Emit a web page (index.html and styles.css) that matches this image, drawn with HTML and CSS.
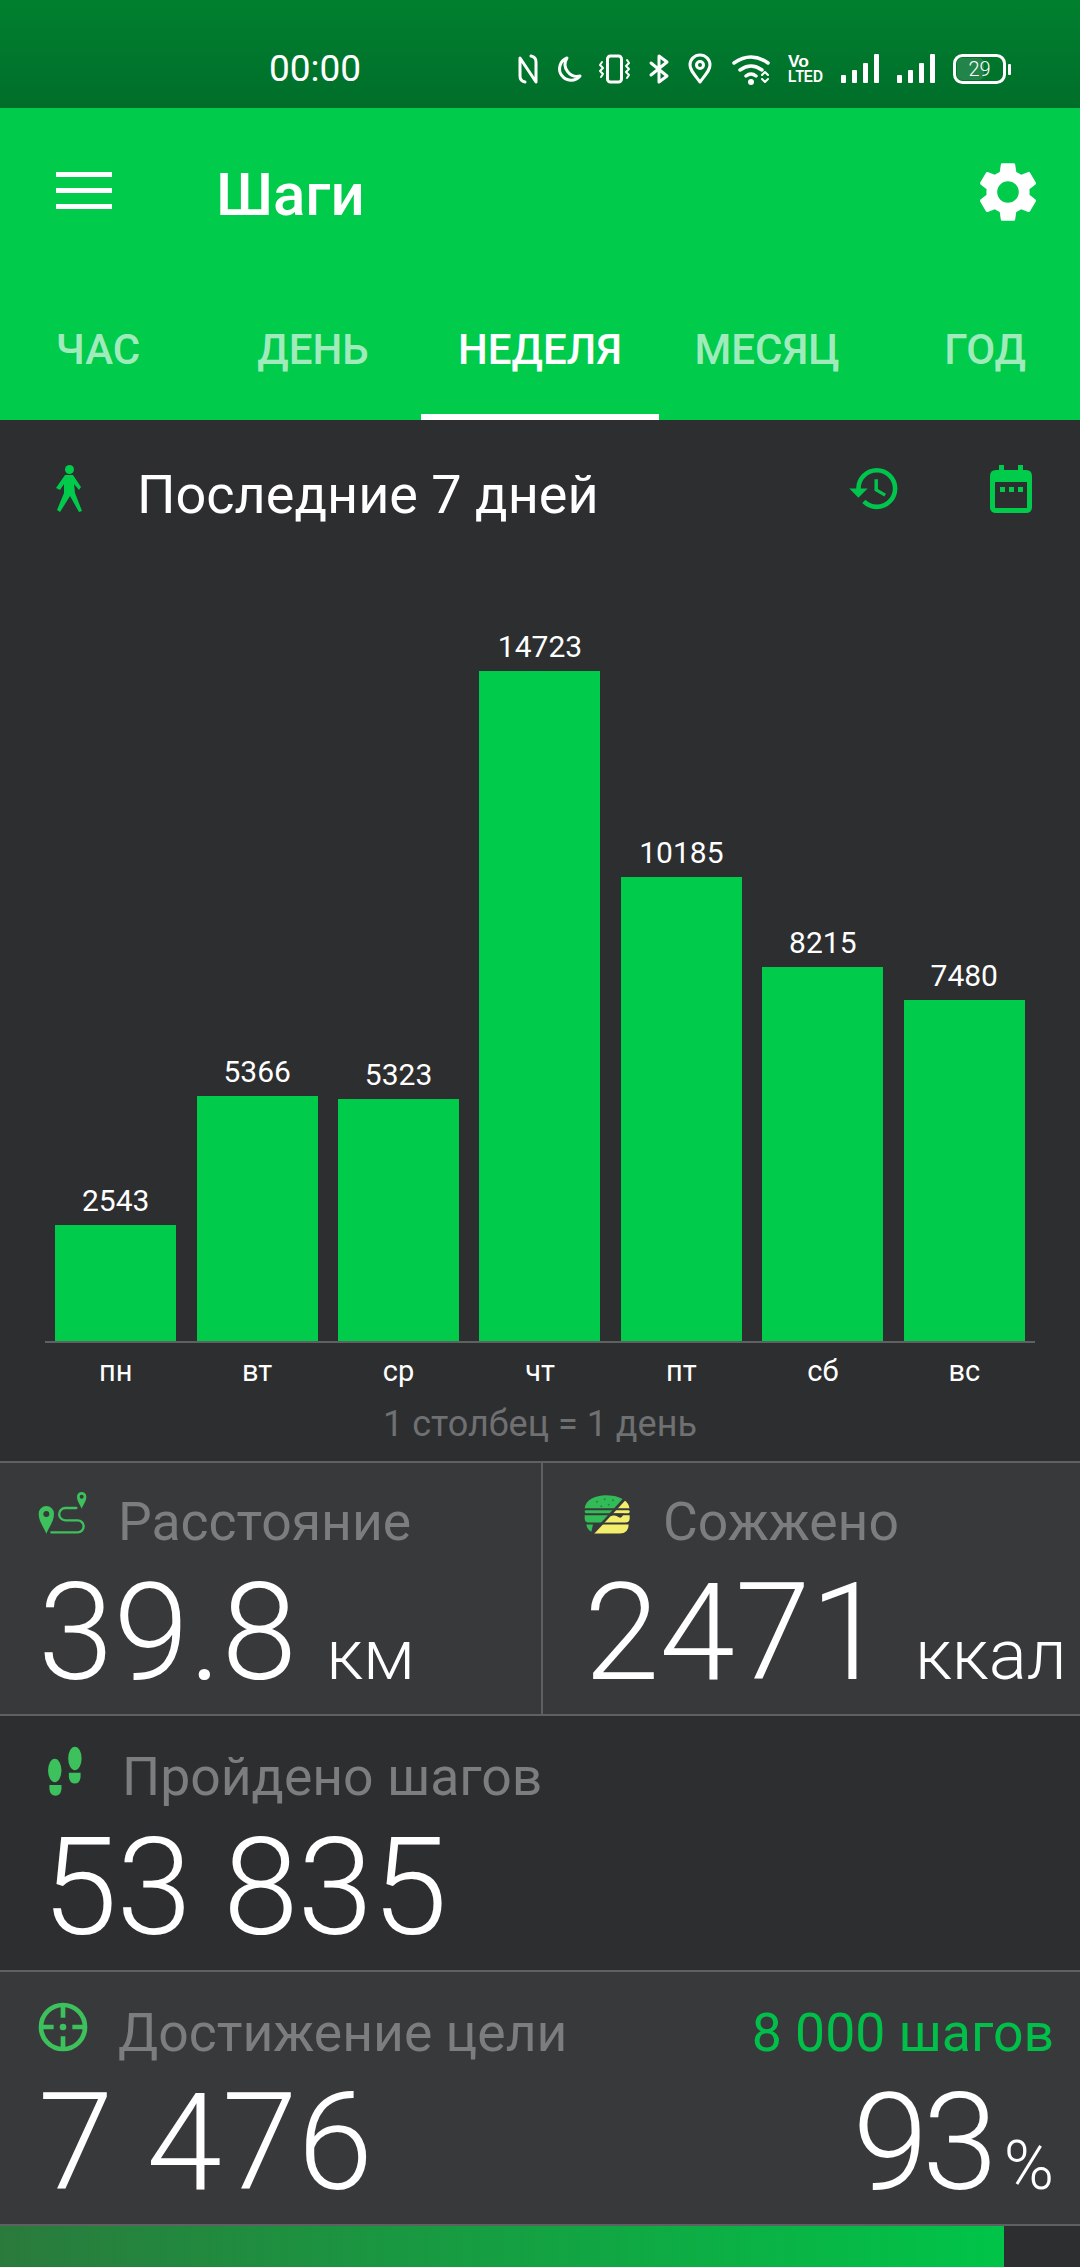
FILE: index.html
```html
<!DOCTYPE html>
<html lang="ru">
<head>
    <meta charset="UTF-8">
    <meta name="viewport" content="width=device-width, initial-scale=1.0">
    <title>Шаги</title>
    <link rel="stylesheet" href="styles.css">
</head>
<body>
    <div class="status-bar">
        <span class="status-time">00:00</span>
        <div class="status-icons">
            <svg width="22" height="30" viewBox="0 0 22 30"><path class="line" d="M8 28 Q3 27 3 22 V4 L19 28 V8 Q19 3 14 2"/></svg>
            <svg width="24" height="30" viewBox="0 0 24 30"><path class="line" d="M10 4 A11.5 11.5 0 1 0 23 22 A12 12 0 0 1 10 4 Z"/></svg>
            <svg width="32" height="30" viewBox="0 0 32 30"><rect class="line" x="8.5" y="2" width="14" height="26" rx="3"/><path class="line thin" d="M3 8 L1 11 L4 14 L1 17 L4 20 L2 23 M28 6 L30 9 L27 12 L30 15 L27 18 L30 21 L28 24"/></svg>
            <svg width="21" height="30" viewBox="0 0 21 30"><path class="line" d="M2 9 L18 22 L10 28 V2 L18 8 L2 21"/></svg>
            <svg width="27" height="30" viewBox="0 0 27 30"><path class="line" d="M12 28 C6 20 2 16 2 11 A10 10 0 0 1 22 11 C22 16 18 20 12 28 Z"/><circle class="line" cx="12" cy="11" r="3.5"/></svg>
            <svg width="37" height="30" viewBox="0 0 37 30"><path class="line wide" d="M1 9 Q18 -3 35 9 M7 16 Q18 8 29 16 M13 22 Q18 18 23 22"/><circle class="dot" cx="18" cy="28" r="3"/><path class="line thin" d="M29 21 L32 18 L35 21 M29 25 L32 28 L35 25"/></svg>
            <svg width="35" height="30" viewBox="0 0 35 30"><text class="volte" x="0" y="13" textLength="21" lengthAdjust="spacingAndGlyphs">Vo</text><text class="volte" x="0" y="28" textLength="35" lengthAdjust="spacingAndGlyphs">LTED</text></svg>
            <svg width="38" height="30" viewBox="0 0 38 30"><rect class="dot" x="0" y="21" width="5" height="8" rx="1"/><rect class="dot" x="11" y="16" width="5" height="13" rx="1"/><rect class="dot" x="22" y="9" width="5" height="20" rx="1"/><rect class="dot" x="33" y="0" width="5" height="29" rx="1"/></svg>
            <svg width="38" height="30" viewBox="0 0 38 30"><rect class="dot" x="0" y="21" width="5" height="8" rx="1"/><rect class="dot" x="11" y="16" width="5" height="13" rx="1"/><rect class="dot" x="22" y="9" width="5" height="20" rx="1"/><rect class="dot" x="33" y="0" width="5" height="29" rx="1"/></svg>
            <svg width="58" height="30" viewBox="0 0 58 30"><rect class="battery-fill" x="4" y="4" width="27" height="22" rx="5"/><rect class="line" x="1.5" y="1.5" width="50" height="27" rx="8"/><rect class="dot" x="55" y="10" width="3" height="11" rx="1"/><text class="battery-text" x="26.5" y="22" text-anchor="middle">29</text></svg>
        </div>
    </div>

    <div class="toolbar">
        <div class="menu-icon"><span></span><span></span><span></span></div>
        <h1>Шаги</h1>
        <svg class="gear" width="72" height="72" viewBox="0 0 24 24"><path d="M19.14 12.94c.04-.3.06-.61.06-.94 0-.32-.02-.64-.07-.94l2.03-1.58a.49.49 0 0 0 .12-.61l-1.92-3.32a.488.488 0 0 0-.59-.22l-2.39.96c-.5-.38-1.03-.7-1.62-.94l-.36-2.54a.484.484 0 0 0-.48-.41h-3.84c-.24 0-.43.17-.47.41l-.36 2.54c-.59.24-1.13.57-1.62.94l-2.39-.96c-.22-.08-.47 0-.59.22L2.74 8.87c-.12.21-.08.47.12.61l2.03 1.58c-.05.3-.09.63-.09.94s.02.64.07.94l-2.03 1.58a.49.49 0 0 0-.12.61l1.92 3.32c.12.22.37.29.59.22l2.39-.96c.5.38 1.03.7 1.62.94l.36 2.54c.05.24.24.41.48.41h3.84c.24 0 .44-.17.47-.41l.36-2.54c.59-.24 1.13-.56 1.62-.94l2.39.96c.22.08.47 0 .59-.22l1.92-3.32c.12-.22.07-.47-.12-.61l-2.01-1.58zM12 15.6c-1.98 0-3.6-1.62-3.6-3.6s1.62-3.6 3.6-3.6 3.6 1.62 3.6 3.6-1.62 3.6-3.6 3.6z"/></svg>
    </div>

    <div class="tabs">
        <div class="tab">ЧАС</div>
        <div class="tab">ДЕНЬ</div>
        <div class="tab tab-active">НЕДЕЛЯ</div>
        <div class="tab">МЕСЯЦ</div>
        <div class="tab">ГОД</div>
    </div>

    <div class="chart-section">
        <div class="chart-header">
            <svg class="walker" width="28" height="48" viewBox="0 0 28 48">
                <circle cx="14.5" cy="4.5" r="4.5"/>
                <path d="M10 10 H18 L26 22 L24 25 L19 19 L20 28 L27 46 L24 47 L15 31 L5 47 L2 45 L9 28 L9 19 L5 25 L1 23 Z"/>
            </svg>
            <div class="chart-title">Последние 7 дней</div>
            <svg class="history" width="55" height="55" viewBox="0 0 24 24"><path d="M13 3a9 9 0 0 0-9 9H1l3.89 3.89.07.14L9 12H6c0-3.87 3.13-7 7-7s7 3.13 7 7-3.13 7-7 7c-1.93 0-3.68-.79-4.94-2.06l-1.42 1.42A8.954 8.954 0 0 0 13 21a9 9 0 0 0 0-18zm-1 5v5l4.28 2.54.72-1.21-3.5-2.08V8H12z"/></svg>
            <svg class="calendar" width="42" height="48" viewBox="0 0 42 48">
                <path fill-rule="evenodd" d="M9 0 H14 V5 H28 V0 H33 V5 H36 Q42 5 42 11 V42 Q42 48 36 48 H6 Q0 48 0 42 V11 Q0 5 6 5 H9 Z M5 17 V43 H37 V17 Z"/>
                <rect x="10" y="22" width="5" height="5"/><rect x="19" y="22" width="5" height="5"/><rect x="28" y="22" width="5" height="5"/>
            </svg>
        </div>

        <div class="bars">
            <div class="bar-col"><div class="bar-value">2543</div><div class="bar" style="height: 116px"></div></div>
            <div class="bar-col"><div class="bar-value">5366</div><div class="bar" style="height: 245px"></div></div>
            <div class="bar-col"><div class="bar-value">5323</div><div class="bar" style="height: 242px"></div></div>
            <div class="bar-col"><div class="bar-value">14723</div><div class="bar" style="height: 670px"></div></div>
            <div class="bar-col"><div class="bar-value">10185</div><div class="bar" style="height: 464px"></div></div>
            <div class="bar-col"><div class="bar-value">8215</div><div class="bar" style="height: 374px"></div></div>
            <div class="bar-col"><div class="bar-value">7480</div><div class="bar" style="height: 341px"></div></div>
        </div>
        <div class="days">
            <div>пн</div><div>вт</div><div>ср</div><div>чт</div><div>пт</div><div>сб</div><div>вс</div>
        </div>
        <div class="chart-note">1 столбец = 1 день</div>
    </div>

    <div class="stat-row stat-light">
        <div class="stat stat-half">
            <div class="stat-label">
                <svg class="icon-route" width="52" height="46" viewBox="55 40 156 138">
                    <path class="icon-fill" fill-rule="evenodd" d="M80 168 C70 145 57 130 57 108 A23 23 0 0 1 103 108 C103 130 90 145 80 168 Z M80 100 A9 9 0 1 0 80 118 A9 9 0 1 0 80 100 Z"/>
                    <path class="icon-fill" fill-rule="evenodd" d="M186 93 C180 78 172 70 172 57 A14 14 0 0 1 200 57 C200 70 192 78 186 93 Z M186 51 A6 6 0 1 0 186 63 A6 6 0 1 0 186 51 Z"/>
                    <path class="icon-line" d="M95 164 H174 A18 18 0 0 0 174 128 H137 A18 18 0 0 1 137 91 H170"/>
                </svg>
                <span>Расстояние</span>
            </div>
            <div class="stat-number">39.8<span class="stat-unit"> км</span></div>
        </div>
        <div class="stat stat-half stat-second">
            <div class="stat-label">
                <svg class="icon-burger" width="46" height="39" viewBox="48 45 138 116">
                    <defs>
                        <clipPath id="burgerGreen"><path d="M0 0 H215 L70 160 H0 Z"/></clipPath>
                        <clipPath id="burgerYellow"><path d="M178 54 H220 V170 H70 Z"/></clipPath>
                    </defs>
                    <g class="burger-shape" clip-path="url(#burgerGreen)">
                        <path d="M50 84 C52 60 80 45 115 45 C150 45 182 60 184 84 Z"/>
                        <rect x="50" y="90" width="135" height="9" rx="4"/>
                        <path d="M50 105 H185 V115 Q185 127 172 127 H62 Q50 127 50 115 Z"/>
                        <path d="M55 133 H75 L70 155 Q57 148 55 133 Z"/>
                    </g>
                    <g class="burger-dots">
                        <circle cx="87" cy="65" r="3"/><circle cx="110" cy="57" r="3"/><circle cx="135" cy="60" r="3"/><circle cx="100" cy="78" r="3"/><circle cx="122" cy="74" r="3"/>
                    </g>
                    <g class="burger-yellow" clip-path="url(#burgerYellow)">
                        <path d="M50 84 C52 60 80 45 115 45 C150 45 182 60 184 84 Z"/>
                        <rect x="50" y="90" width="135" height="9" rx="4"/>
                        <path d="M50 105 H185 V115 Q185 127 172 127 H62 Q50 127 50 115 Z"/>
                        <path d="M55 133 H182 Q182 160 155 160 H82 Q55 160 55 133 Z"/>
                    </g>
                    <path class="burger-cheese" d="M130 100 H168 Q160 118 150 110 Q140 102 128 108 Z"/>
                </svg>
                <span>Сожжено</span>
            </div>
            <div class="stat-number">2471<span class="stat-unit"> ккал</span></div>
        </div>
    </div>

    <div class="stat-row stat-dark stat-row-tall">
        <div class="stat stat-steps">
            <div class="stat-label">
                <svg class="icon-steps" width="37" height="51" viewBox="85 30 110 152">
                    <ellipse class="icon-fill" cx="168" cy="67" rx="20" ry="35"/>
                    <path class="icon-fill" d="M150 110 H185 V122 Q183 142 168 142 Q152 142 150 122 Z"/>
                    <ellipse class="icon-fill" cx="108" cy="103" rx="20" ry="35"/>
                    <path class="icon-fill" d="M92 146 H128 V158 Q126 178 110 178 Q94 178 92 158 Z"/>
                </svg>
                <span>Пройдено шагов</span>
            </div>
            <div class="stat-number">53 835</div>
        </div>
    </div>

    <div class="stat-row stat-light stat-row-goal">
        <div class="stat stat-goal">
            <div class="stat-label">
                <svg class="icon-target" width="50" height="50" viewBox="53 28 150 150">
                    <circle class="icon-ring" cx="128" cy="103" r="66"/>
                    <path class="icon-ring" d="M128 38 V75 M128 131 V168 M63 103 H100 M156 103 H193"/>
                    <circle class="icon-fill" cx="128" cy="103" r="10"/>
                </svg>
                <span>Достижение цели</span>
                <span class="goal-target">8 000 шагов</span>
            </div>
            <div class="goal-numbers">
                <div class="stat-number">7 476</div>
                <div class="stat-number goal-value">93<span class="goal-percent">%</span></div>
            </div>
        </div>
    </div>

    <div class="progress">
        <div class="progress-fill" style="width: 93%"></div>
    </div>
</body>
</html>
```

FILE: styles.css
```css
* {
    box-sizing: border-box;
}
html, body {
    margin: 0;
    padding: 0;
}
body {
    width: 1080px;
    height: 2267px;
    overflow: hidden;
    font-family: Roboto, "Noto Sans", sans-serif;
    color: white;
    background-color: #2d2e30;
}

/* status bar */
.status-bar {
    height: 108px;
    padding: 54px 0 0 269px;
    display: flex;
    align-items: flex-start;
    background: linear-gradient(#00802f, #006e2a);
}
.status-time {
    width: 248px;
    font-size: 37px;
    line-height: 30px;
}
.status-icons {
    display: flex;
    gap: 18px;
    height: 30px;
}
.status-icons svg {
    overflow: visible;
}
.line {
    fill: none;
    stroke: white;
    stroke-width: 3;
    stroke-linecap: round;
    stroke-linejoin: round;
}
.thin {
    stroke-width: 2;
}
.wide {
    stroke-width: 3.5;
}
.dot {
    fill: white;
}
.volte {
    font-family: "Liberation Sans", sans-serif;
    font-size: 16px;
    font-weight: bold;
    fill: white;
}
.battery-fill {
    fill: #23844a;
}
.battery-text {
    font-size: 20px;
    font-weight: 300;
    fill: white;
}

/* toolbar and tabs */
.toolbar {
    height: 156px;
    padding: 52px 36px 0 56px;
    display: flex;
    align-items: flex-start;
    background-color: #00cb4b;
}
.menu-icon {
    width: 56px;
    margin-top: 12px;
    display: flex;
    flex-direction: column;
    gap: 11px;
}
.menu-icon span {
    display: block;
    height: 5px;
    background-color: white;
}
h1 {
    margin: 0 0 0 104px;
    font-size: 60px;
    line-height: 70px;
    font-weight: 500;
}
.gear {
    margin-left: auto;
    margin-top: -4px;
    fill: white;
}
.tabs {
    height: 156px;
    display: grid;
    grid-template-columns: 196px 225px 238px 216px 205px;
    background-color: #00cb4b;
}
.tab {
    padding-top: 61px;
    text-align: center;
    font-size: 42px;
    line-height: 50px;
    font-weight: 500;
    color: rgba(255, 255, 255, 0.65);
}
.tab:nth-child(2) {
    padding-left: 9px;
}
.tab:nth-child(5) {
    padding-left: 15px;
}
.tab-active {
    color: white;
    border-bottom: 6px solid white;
}

/* chart */
.chart-section {
    height: 1043px;
    padding: 45px 45px 0;
    border-bottom: 2px solid #5f6061;
}
.chart-header {
    height: 60px;
    display: flex;
    align-items: flex-start;
}
.chart-title {
    margin-left: 54px;
    font-size: 54px;
    line-height: 60px;
}
.walker {
    margin-left: 10px;
    fill: #00cb4b;
}
.history {
    margin-left: auto;
    margin-top: -4px;
    fill: #00c44c;
}
.calendar {
    margin-left: 88px;
    margin-right: 3px;
    fill: #00cb4b;
}
.bars {
    height: 818px;
    display: flex;
    align-items: flex-end;
    border-bottom: 2px solid #5f6061;
}
.bar-col {
    flex: 1;
    display: flex;
    flex-direction: column;
    align-items: center;
}
.bar-value {
    margin-bottom: 7px;
    font-size: 30px;
    line-height: 34px;
}
.bar {
    width: 121px;
    background-color: #00cb4b;
}
.days {
    margin-top: 11px;
    display: grid;
    grid-template-columns: repeat(7, 1fr);
    text-align: center;
    font-size: 29px;
    line-height: 34px;
}
.chart-note {
    margin-top: 16px;
    text-align: center;
    font-size: 36px;
    line-height: 40px;
    color: #6f7072;
}

/* stat panels */
.stat-row {
    height: 253px;
    display: flex;
    border-bottom: 2px solid #5f6061;
}
.stat-row-tall {
    height: 256px;
}
.stat-row-goal {
    height: 254px;
}
.stat-light {
    background-color: #38393b;
}
.stat-dark {
    background-color: #2d2e30;
}
.stat {
    flex: 1;
    min-width: 0;
    padding: 31px 26px 0 38px;
    overflow: hidden;
}
.stat-half {
    flex: none;
    width: 541px;
    padding-top: 29px;
}
.stat-second {
    width: 539px;
    padding-left: 41px;
    padding-right: 0;
    border-left: 2px solid #5f6061;
}
.stat-steps {
    padding-left: 47px;
}
.stat-steps .stat-number {
    margin-left: -5px;
    letter-spacing: -1px;
}
.stat-label {
    height: 60px;
    display: flex;
    align-items: flex-start;
    font-size: 53.5px;
    line-height: 60px;
    color: #7c7d7f;
}
.stat-label svg {
    flex: none;
    margin-top: -1px;
}
.icon-route {
    margin-right: 28px;
}
.stat-label .icon-burger {
    margin-top: 3px;
    margin-right: 33px;
}
.icon-steps {
    margin-right: 38px;
}
.icon-target {
    margin-right: 30px;
}
.icon-fill {
    fill: #3cc15c;
}
.icon-line {
    fill: none;
    stroke: #3cc15c;
    stroke-width: 7;
    stroke-linecap: round;
}
.icon-ring {
    fill: none;
    stroke: #3cc15c;
    stroke-width: 14;
}
.burger-shape {
    fill: #33bb58;
}
.burger-yellow {
    fill: #f3ee6c;
}
.burger-dots {
    fill: #1f8a41;
}
.burger-cheese {
    fill: #38393b;
}
.goal-target {
    margin-left: auto;
    color: #00c04a;
}
.stat-number {
    margin-top: 11px;
    font-size: 136px;
    line-height: 140px;
    font-weight: 300;
    white-space: nowrap;
}
.stat-unit {
    margin-left: 12px;
    font-size: 71px;
}
.goal-numbers {
    display: flex;
    justify-content: space-between;
}
.goal-numbers .stat-number {
    margin-top: 10px;
}
.goal-value {
    letter-spacing: -6px;
}
.goal-percent {
    margin-left: 12px;
    font-size: 68px;
    letter-spacing: 0;
}

/* bottom progress bar */
.progress {
    height: 41px;
}
.progress-fill {
    height: 100%;
    background: linear-gradient(to right, #2a7a3c, #00c448);
}
```
